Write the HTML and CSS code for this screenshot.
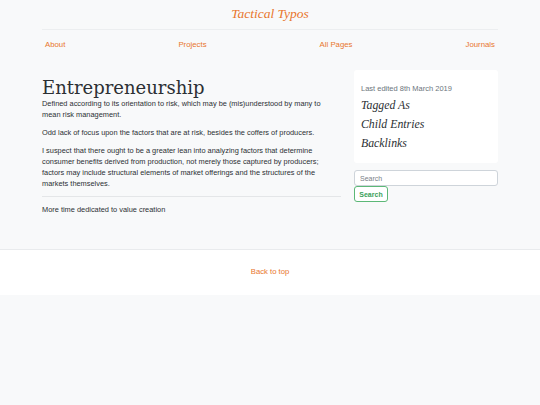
FILE: index.html
```html
<!DOCTYPE html>
<html>
<head>
<meta charset="utf-8">
<link rel="stylesheet" href="styles.css">
</head>
<body>
<div class="page">
  <header class="container header">
    <div class="brand">Tactical Typos</div>
    <nav class="nav">
      <a href="#">About</a>
      <a href="#">Projects</a>
      <a href="#">All Pages</a>
      <a href="#">Journals</a>
    </nav>
  </header>
  <div class="container content">
    <main class="main">
      <h1 class="title">Entrepreneurship</h1>
      <p>Defined according to its orientation to risk, which may be (mis)understood by many to mean risk management.</p>
      <p>Odd lack of focus upon the factors that are at risk, besides the coffers of producers.</p>
      <p>I suspect that there ought to be a greater lean into analyzing factors that determine consumer benefits derived from production, not merely those captured by producers; factors may include structural elements of market offerings and the structures of the markets themselves.</p>
      <hr class="rule">
      <p>More time dedicated to value creation</p>
    </main>
    <aside class="side">
      <div class="card">
        <div class="edited">Last edited 8th March 2019</div>
        <h3 class="sub">Tagged As</h3>
        <h3 class="sub">Child Entries</h3>
        <h3 class="sub">Backlinks</h3>
      </div>
      <form class="search">
        <input class="search-input" type="text" placeholder="Search">
        <button class="search-btn" type="button">Search</button>
      </form>
    </aside>
  </div>
  <footer class="footer">
    <a href="#">Back to top</a>
  </footer>
</div>
</body>
</html>
```
FILE: styles.css
```css
html, body {
  margin: 0;
  padding: 0;
  background: #f8f9fa;
}
body {
  font-family: "Liberation Sans", Arial, sans-serif;
  color: #2b2f33;
  font-size: 7.4px;
}
a {
  color: #e8762d;
  text-decoration: none;
}
.container {
  width: 456px;
  margin: 0 auto;
}
.header {
  padding-top: 5px;
}
.brand {
  text-align: center;
  font-family: "Liberation Serif", Georgia, serif;
  font-style: italic;
  color: #e8762d;
  font-size: 13.5px;
  line-height: 17px;
  padding-bottom: 7px;
  border-bottom: 1px solid #eceef0;
}
.nav {
  display: flex;
  justify-content: space-between;
  padding: 10px 3px 0;
  line-height: 10px;
  font-size: 7.8px;
}
.content {
  display: flex;
  gap: 13px;
  padding-top: 20px;
  padding-bottom: 27px;
}
.main {
  flex: 1;
}
.title {
  font-family: "DejaVu Serif", Georgia, serif;
  font-weight: normal;
  font-size: 18px;
  line-height: 20px;
  margin: 8px 0 0;
}
.main p {
  margin: 0 0 7.2px;
  line-height: 11px;
  padding-right: 15px;
}
.rule {
  border: 0;
  border-top: 1px solid #e4e6e8;
  margin: -1px 0 7px;
}
.side {
  width: 144px;
}
.card {
  background: #fff;
  border-radius: 3px;
  padding: 14px 7px 13px;
}
.edited {
  color: #6c757d;
  font-size: 7.5px;
  line-height: 10px;
  margin-bottom: 4px;
}
.sub {
  font-family: "Liberation Serif", Georgia, serif;
  font-style: italic;
  font-weight: normal;
  font-size: 11.8px;
  line-height: 14px;
  margin: 0 0 5px;
}
.sub:last-child { margin-bottom: 0; }
.search {
  margin-top: 7px;
}
.search-input {
  display: block;
  box-sizing: border-box;
  width: 144px;
  height: 16px;
  border: 1px solid #ced4da;
  border-radius: 3px;
  padding: 0 5px;
  font-family: "Liberation Sans", Arial, sans-serif;
  font-size: 7px;
  background: #fff;
}
.search-input::placeholder { color: #7a8087; }
.search-btn {
  display: block;
  box-sizing: border-box;
  height: 16px;
  width: 34px;
  padding: 0;
  border: 1px solid #5cb877;
  border-radius: 3px;
  background: #fff;
  color: #3a9f5a;
  font-family: "Liberation Sans", Arial, sans-serif;
  font-weight: bold;
  font-size: 7px;
}
.footer {
  background: #fff;
  border-top: 1px solid #e9ebed;
  text-align: center;
  padding: 17px 0 18px;
  line-height: 10px;
  font-size: 7.7px;
}
```
